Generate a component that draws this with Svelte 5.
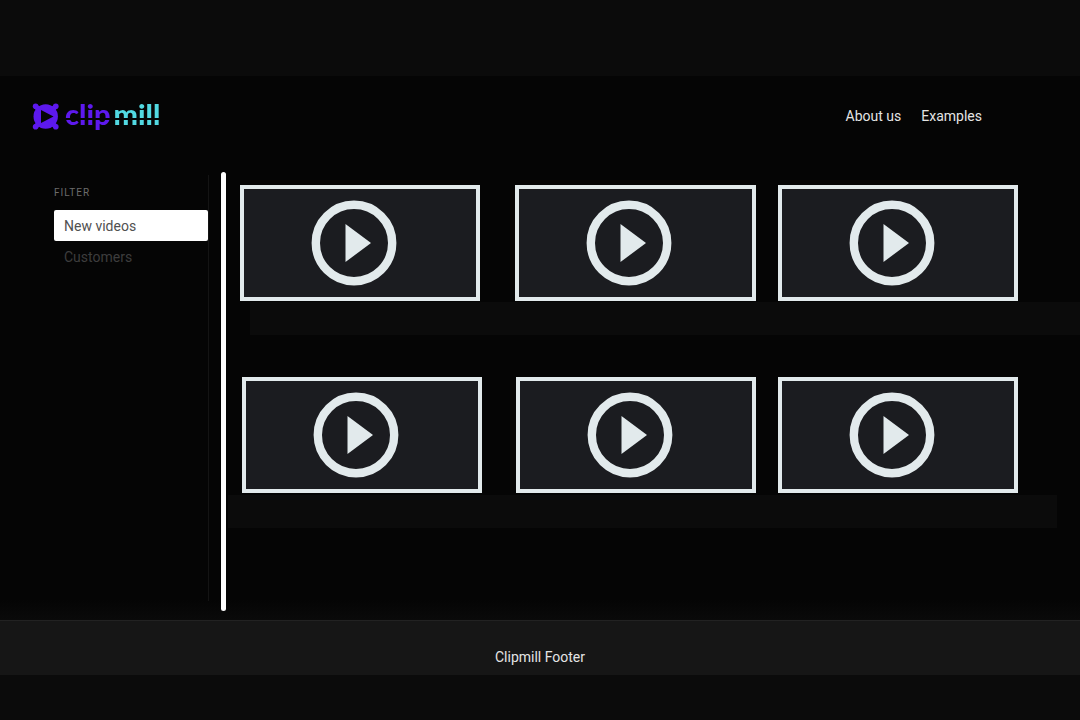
<script>
  let active = $state('New videos');
  const filters = ['New videos', 'Customers'];
  const rows = [
    { name: 'first', videos: [1, 2, 3] },
    { name: 'second', videos: [4, 5, 6] }
  ];
</script>

<div class="page">
  <div class="site">
    <header>
      <a class="logo" href="#home" aria-label="clipmill">
        <svg viewBox="0 0 28 28" width="28" height="28" aria-hidden="true">
          <g fill="#5d19ee">
            <circle cx="13.700" cy="14.500" r="12.200" />
            <circle cx="3.600" cy="4.300" r="2.800" />
            <circle cx="23.800" cy="4.300" r="2.800" />
            <circle cx="3.600" cy="24.700" r="2.800" />
            <circle cx="23.800" cy="24.700" r="2.800" />
          </g>
          <path d="M3.600 4.300L23.800 24.700M23.800 4.300L3.600 24.700" stroke="#5d19ee" stroke-width="5" />
          <path d="M9 8L21.500 14.500L9 21Z" fill="#060606" />
        </svg>
        <span class="word"><span class="clip">clip</span><span class="mill">mill</span></span>
      </a>
      <nav>
        <a href="#about">About us</a>
        <a href="#examples">Examples</a>
      </nav>
    </header>

    <div class="content">
      <aside>
        <h2>FILTER</h2>
        {#each filters as filter}
          <button class="filter" class:active={active === filter} onclick={() => (active = filter)}>{filter}</button>
        {/each}
      </aside>
      <div class="divider"></div>
      <main>
        {#each rows as row}
          <section class={row.name}>
            <div class="videos">
              {#each row.videos as video}
                <button class="video" aria-label="Play video {video}">
                  <svg viewBox="0 0 86 86" width="86" height="86" aria-hidden="true">
                    <circle cx="43" cy="43" r="38.2" fill="none" stroke="#e2eaec" stroke-width="8.400" />
                    <path d="M34.500 24V62L60 43Z" fill="#e2eaec" />
                  </svg>
                </button>
              {/each}
            </div>
            <div class="band"></div>
          </section>
        {/each}
      </main>
    </div>
    <footer>Clipmill Footer</footer>
  </div>
</div>

<style>
  :global(body) {
    margin: 0;
    background: #0b0b0b;
  }

  .page {
    padding: 76px 0 45px;
    font: 14px/20px Roboto, sans-serif;
    color: #e4e4e4;
  }

  .page * {
    box-sizing: border-box;
  }

  .site {
    background: #050505;
  }

  header {
    display: flex;
    align-items: center;
    justify-content: space-between;
    height: 80px;
    padding: 0 98px 0 32px;
  }

  a {
    color: inherit;
    text-decoration: none;
  }

  .logo {
    display: flex;
    align-items: center;
    gap: 5px;
  }

  .word {
    display: flex;
    gap: 3px;
    padding-bottom: 4px;
    font: 900 29px/36px Lato, sans-serif;
  }

  .clip,
  .mill {
    color: transparent;
    background: linear-gradient(var(--ink) 22px, transparent 22px, transparent 24px, var(--ink) 24px);
    background-clip: text;
  }

  .clip {
    --ink: #5d19ee;
  }

  .mill {
    --ink: #52d9e2;
  }

  nav {
    display: flex;
    gap: 20px;
  }

  .content {
    display: flex;
    height: 464px;
    padding-top: 16px;
    background: linear-gradient(transparent 444px, #0a0a0a 464px);
  }

  aside {
    width: 155px;
    height: 426px;
    margin: 3px 12px 0 54px;
    padding-top: 10px;
    border-right: 1px solid #141414;
  }

  h2 {
    margin: 0 0 9px;
    font-size: 10px;
    font-weight: 400;
    line-height: 16px;
    letter-spacing: 1px;
    color: #6c6c6c;
  }

  .filter {
    display: block;
    width: 100%;
    height: 31px;
    padding: 0 10px;
    border: 0;
    border-radius: 2px;
    background: none;
    font: inherit;
    text-align: left;
    color: #3d3d3d;
  }

  .filter.active {
    background: #fff;
    color: #505050;
  }

  .divider {
    flex: none;
    width: 5px;
    height: 439px;
    border-radius: 3px;
    background: #fff;
  }

  main {
    flex: 1;
    min-width: 0;
    padding-top: 13px;
  }

  section {
    --first-gap: 35px;
    padding-left: 14px;
    margin-bottom: 42px;
  }

  .second {
    --first-gap: 34px;
    padding-left: 16px;
  }

  .videos {
    display: flex;
    padding-right: 62px;
  }

  .video {
    display: flex;
    flex: 1;
    align-items: center;
    justify-content: center;
    height: 116px;
    padding: 0 12px 0 0;
    border: 4px solid #e2eaec;
    background: #1b1c20;
  }

  .video:first-child {
    margin-right: var(--first-gap);
  }

  .video:last-child {
    margin-left: 22px;
  }

  .band {
    height: 33px;
    margin: 1px 0 0 10px;
    background: #0b0b0b;
  }

  .second .band {
    margin: 2px 23px 0 -14px;
  }

  footer {
    display: flex;
    align-items: center;
    justify-content: center;
    height: 55px;
    padding-top: 18px;
    border-top: 1px solid #222;
    background: #161616;
  }
</style>
